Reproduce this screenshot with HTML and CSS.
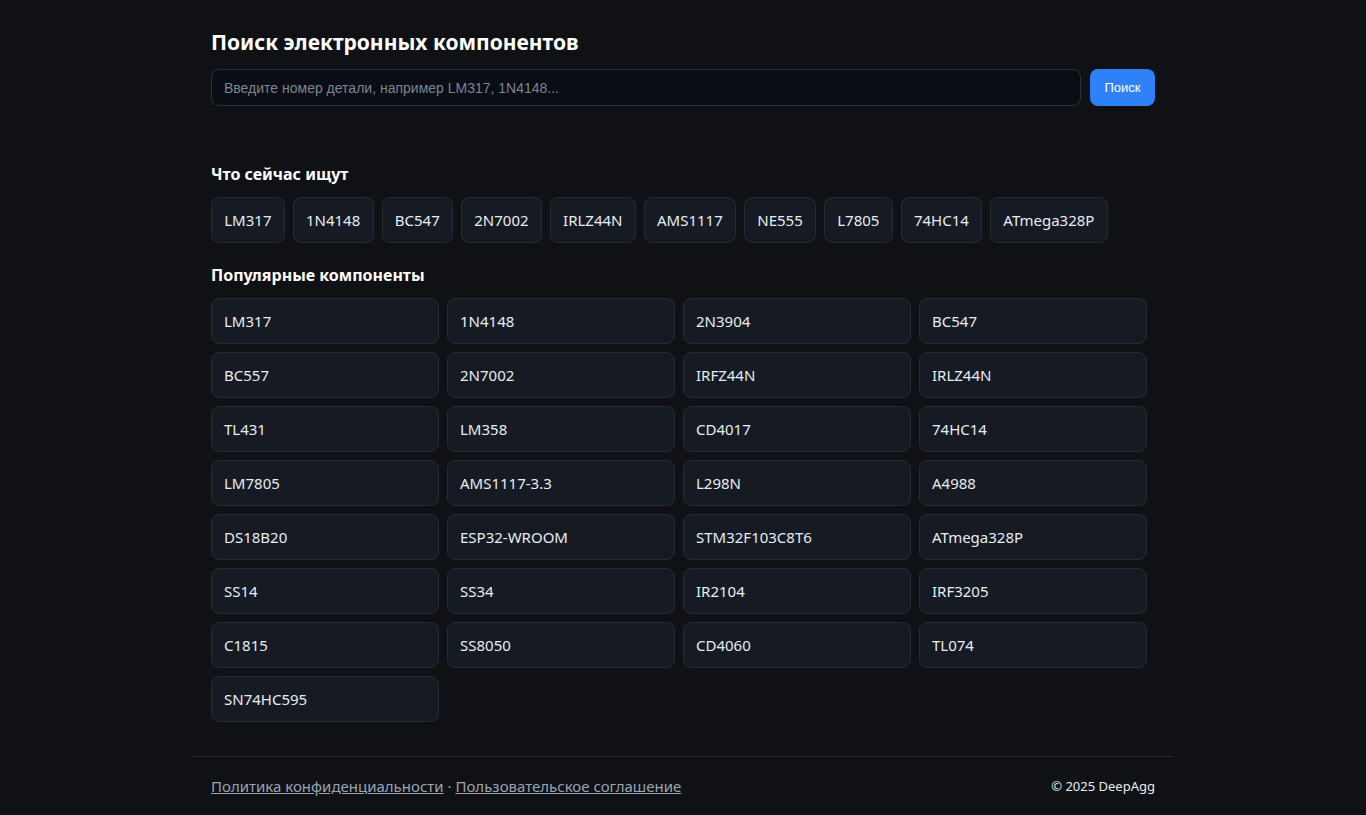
FILE: index.html
```html
<!DOCTYPE html>
<html lang="ru">
<head>
<meta charset="utf-8">
<title>Поиск электронных компонентов</title>
<link rel="stylesheet" href="styles.css">
</head>
<body>
<div class="page">
  <header class="hero">
    <h1 class="title">Поиск электронных компонентов</h1>
    <form class="search">
      <input class="search-input" type="text" placeholder="Введите номер детали, например LM317, 1N4148...">
      <button class="search-btn" type="button">Поиск</button>
    </form>
  </header>

  <section class="trending">
    <h2 class="section-title">Что сейчас ищут</h2>
    <div class="chips">
      <a class="chip">LM317</a>
      <a class="chip">1N4148</a>
      <a class="chip">BC547</a>
      <a class="chip">2N7002</a>
      <a class="chip">IRLZ44N</a>
      <a class="chip">AMS1117</a>
      <a class="chip">NE555</a>
      <a class="chip">L7805</a>
      <a class="chip">74HC14</a>
      <a class="chip">ATmega328P</a>
    </div>
  </section>

  <section class="popular">
    <h2 class="section-title">Популярные компоненты</h2>
    <div class="grid">
      <a class="card">LM317</a>
      <a class="card">1N4148</a>
      <a class="card">2N3904</a>
      <a class="card">BC547</a>
      <a class="card">BC557</a>
      <a class="card">2N7002</a>
      <a class="card">IRFZ44N</a>
      <a class="card">IRLZ44N</a>
      <a class="card">TL431</a>
      <a class="card">LM358</a>
      <a class="card">CD4017</a>
      <a class="card">74HC14</a>
      <a class="card">LM7805</a>
      <a class="card">AMS1117-3.3</a>
      <a class="card">L298N</a>
      <a class="card">A4988</a>
      <a class="card">DS18B20</a>
      <a class="card">ESP32-WROOM</a>
      <a class="card">STM32F103C8T6</a>
      <a class="card">ATmega328P</a>
      <a class="card">SS14</a>
      <a class="card">SS34</a>
      <a class="card">IR2104</a>
      <a class="card">IRF3205</a>
      <a class="card">C1815</a>
      <a class="card">SS8050</a>
      <a class="card">CD4060</a>
      <a class="card">TL074</a>
      <a class="card">SN74HC595</a>
    </div>
  </section>

  <footer class="footer">
    <div class="footer-links">
      <a class="footer-link" href="#">Политика конфиденциальности</a>
      <span class="sep">·</span>
      <a class="footer-link" href="#">Пользовательское соглашение</a>
    </div>
    <div class="copy">© 2025 DeepAgg</div>
  </footer>
</div>
</body>
</html>
```

FILE: styles.css
```css
html, body {
  margin: 0;
  padding: 0;
  background: #0f1115;
}
body {
  color: #e6edf3;
  font-family: "Noto Sans", "Open Sans", sans-serif;
}
.page {
  max-width: 980px;
  margin: 0 auto;
  padding: 0 18px;
  box-sizing: border-box;
}
.hero {
  padding-top: 28px;
}
.title {
  margin: 0 0 13px;
  font-size: 21px;
  line-height: 28px;
  font-weight: 700;
  color: #ffffff;
}
.search {
  display: flex;
  gap: 9px;
  margin: 0;
}
.search-input {
  flex: 1;
  height: 37px;
  box-sizing: border-box;
  background: #0a0d13;
  border: 1px solid #2a2f3a;
  border-radius: 8px;
  padding: 0 12px;
  color: #e6edf3;
  font-family: "Liberation Sans", Arial, sans-serif;
  font-size: 14px;
  outline: none;
}
.search-input::placeholder {
  color: #7d8590;
}
.search-btn {
  width: 65px;
  height: 37px;
  border: none;
  border-radius: 8px;
  background: #2f81f7;
  color: #ffffff;
  font-family: "Liberation Sans", Arial, sans-serif;
  font-size: 13px;
  padding: 0;
}
.section-title {
  margin: 0;
  font-size: 16px;
  line-height: 24px;
  font-weight: 700;
  color: #ffffff;
}
.trending {
  margin-top: 56px;
}
.trending .section-title {
  margin-bottom: 11px;
}
.chips {
  display: flex;
  flex-wrap: wrap;
  gap: 8px;
}
.chip {
  height: 46px;
  box-sizing: border-box;
  display: flex;
  align-items: center;
  padding: 0 12.25px;
  background: #161a22;
  border: 1px solid #262b36;
  border-radius: 8px;
  font-size: 15px;
  color: #e6edf3;
}
.popular {
  margin-top: 20px;
}
.popular .section-title {
  margin-bottom: 11px;
}
.grid {
  display: grid;
  grid-template-columns: repeat(4, 228px);
  gap: 8px;
}
.card {
  height: 46px;
  box-sizing: border-box;
  display: flex;
  align-items: center;
  padding: 0 12px;
  background: #161a22;
  border: 1px solid #262b36;
  border-radius: 8px;
  font-size: 15px;
  color: #e6edf3;
}
.footer {
  margin: 34px -18px 0;
  padding: 19px 18px 19px;
  border-top: 1px solid #262b36;
  display: flex;
  justify-content: space-between;
  align-items: center;
}
.footer-links {
  font-size: 15px;
  line-height: 20px;
  color: #9aa4b2;
}
.footer-link {
  color: #9aa4b2;
  text-decoration: underline;
}
.sep {
  color: #9aa4b2;
}
.copy {
  font-size: 13px;
  color: #e6edf3;
}
```
